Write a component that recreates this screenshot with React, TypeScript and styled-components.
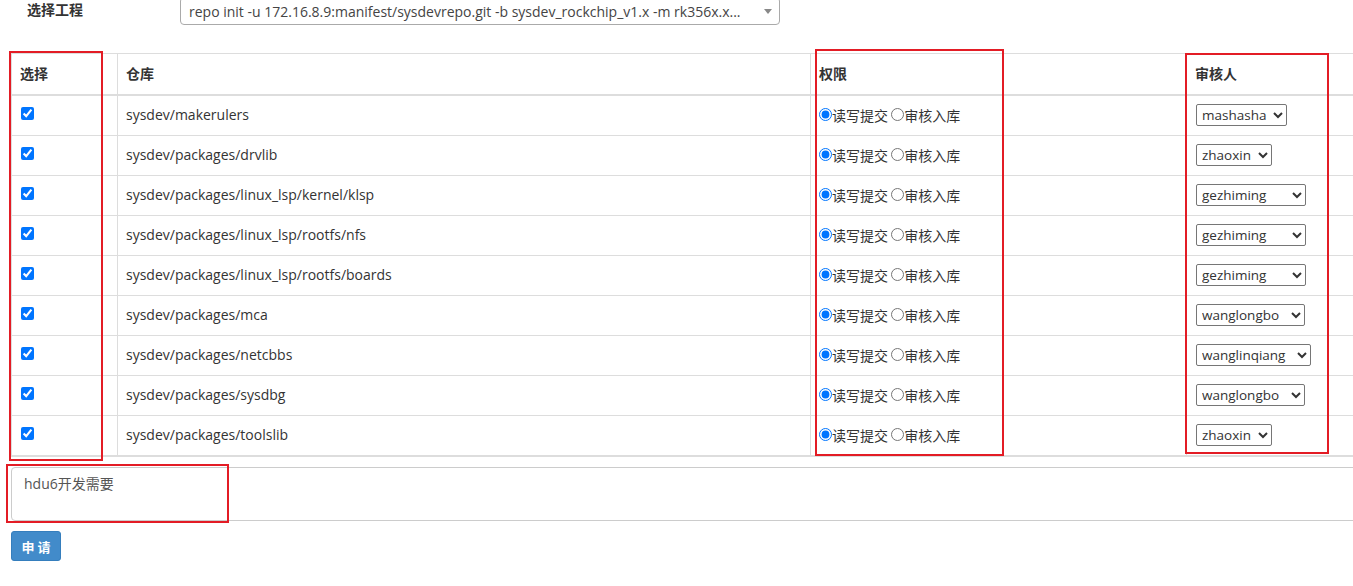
import React from "react";
import styled, { createGlobalStyle } from "styled-components";

const GlobalStyle = createGlobalStyle`
  html, body {
    margin: 0;
    padding: 0;
    overflow: hidden;
    background: #fff;
  }
  * { box-sizing: border-box; }
  body {
    font-family: "Open Sans", "Noto Sans CJK SC", sans-serif;
    font-size: 14px;
    color: #333;
  }
`;

const Page = styled.div`
  position: relative;
  display: flow-root;
  width: 1440px;
  height: 586px;
`;

const TopBar = styled.div`
  display: flex;
  align-items: flex-start;
  margin-top: -3px;
  padding-left: 27px;
`;

const Label = styled.div`
  width: 153px;
  padding-top: 3px;
  line-height: 18px;
  font-weight: bold;
  font-family: "Noto Sans CJK SC", sans-serif;
  font-size: 14px;
  color: #333;
`;

const Select2Box = styled.div`
  position: relative;
  width: 600px;
  height: 28px;
  border: 1px solid #aaa;
  border-radius: 4px;
  background: #fff;
  padding-left: 8px;
  line-height: 27px;
  color: #444;
  font-size: 14px;
  white-space: nowrap;
  overflow: hidden;
`;

const Select2Arrow = styled.span`
  position: absolute;
  right: 7px;
  top: 11px;
  width: 0;
  height: 0;
  border-style: solid;
  border-width: 5px 4px 0 4px;
  border-color: #888 transparent transparent transparent;
`;

const Table = styled.table`
  margin: 28px 0 0 11px;
  border-collapse: separate;
  border-spacing: 0;
  table-layout: fixed;
  width: 1420px;
  border-bottom: 1px solid #ddd;
`;

const HeadCell = styled.th`
  height: 43px;
  padding: 0 8px 2px;
  text-align: left;
  font-weight: bold;
  font-family: "Noto Sans CJK SC", sans-serif;
  font-size: 14px;
  color: #333;
  border-top: 1px solid #ddd;
  border-bottom: 2px solid #ddd;
  border-left: 1px solid #ddd;
  vertical-align: middle;
`;

const Cell = styled.td`
  height: 40px;
  padding: 0 8px 2px;
  border-bottom: 1px solid #ddd;
  border-left: 1px solid #ddd;
  vertical-align: middle;
  color: #333;
  font-size: 14px;
  white-space: nowrap;
`;

const Check = styled.input.attrs({ type: "checkbox" })`
  display: block;
  width: 13px;
  height: 13px;
  margin: 0 0 3px 1px;
`;

const RadioGroup = styled.div`
  display: flex;
  align-items: center;
  font-family: "Noto Sans CJK SC", sans-serif;
  font-size: 14px;
  line-height: 20px;
  color: #333;
  white-space: pre;
`;

const Radio = styled.input.attrs({ type: "radio" })`
  width: 13px;
  height: 13px;
  margin: 0 0 1px 0;
`;

const Reviewer = styled.select<{ $w: number }>`
  width: ${(p) => p.$w}px;
  height: 22px;
  margin: 0 0 0 1px;
  font-family: "Open Sans", sans-serif;
  font-size: 13.5px;
  color: #333;
  border: 1px solid #767676;
  border-radius: 2px;
  background: #fff;
  padding: 0 1px;
`;

const Note = styled.textarea`
  display: block;
  margin: 10px 0 0 11px;
  width: 1420px;
  height: 54px;
  padding: 6px 12px;
  border: 1px solid #ccc;
  border-radius: 4px;
  font-family: "Open Sans", "Noto Sans CJK SC", sans-serif;
  font-size: 14px;
  line-height: 20px;
  color: #555;
  resize: none;
  outline: none;
`;

const SubmitButton = styled.button`
  display: block;
  margin: 10px 0 0 11px;
  width: 50px;
  height: 30px;
  border: 1px solid #357ebd;
  border-radius: 3px;
  background: #428bca;
  color: #fff;
  font-family: "Noto Sans CJK SC", sans-serif;
  font-weight: bold;
  font-size: 13px;
  padding: 0;
  white-space: pre;
`;

const Mark = styled.div<{ $x: number; $y: number; $w: number; $h: number }>`
  position: absolute;
  left: ${(p) => p.$x}px;
  top: ${(p) => p.$y}px;
  width: ${(p) => p.$w}px;
  height: ${(p) => p.$h}px;
  border: 2px solid #e31c25;
  pointer-events: none;
`;

const rows: { repo: string; reviewer: string; w: number }[] = [
  { repo: "sysdev/makerulers", reviewer: "mashasha", w: 91 },
  { repo: "sysdev/packages/drvlib", reviewer: "zhaoxin", w: 76 },
  { repo: "sysdev/packages/linux_lsp/kernel/klsp", reviewer: "gezhiming", w: 110 },
  { repo: "sysdev/packages/linux_lsp/rootfs/nfs", reviewer: "gezhiming", w: 110 },
  { repo: "sysdev/packages/linux_lsp/rootfs/boards", reviewer: "gezhiming", w: 110 },
  { repo: "sysdev/packages/mca", reviewer: "wanglongbo", w: 109 },
  { repo: "sysdev/packages/netcbbs", reviewer: "wanglinqiang", w: 115 },
  { repo: "sysdev/packages/sysdbg", reviewer: "wanglongbo", w: 109 },
  { repo: "sysdev/packages/toolslib", reviewer: "zhaoxin", w: 76 },
];

export default function App() {
  return (
    <>
      <GlobalStyle />
      <Page>
        <TopBar>
          <Label>选择工程</Label>
          <Select2Box>
            repo init -u 172.16.8.9:manifest/sysdevrepo.git -b sysdev_rockchip_v1.x -m rk356x.x...
            <Select2Arrow />
          </Select2Box>
        </TopBar>

        <Table>
          <colgroup>
            <col style={{ width: 106 }} />
            <col style={{ width: 693 }} />
            <col style={{ width: 376 }} />
            <col style={{ width: 245 }} />
          </colgroup>
          <thead>
            <tr>
              <HeadCell>选择</HeadCell>
              <HeadCell>仓库</HeadCell>
              <HeadCell>权限</HeadCell>
              <HeadCell>审核人</HeadCell>
            </tr>
          </thead>
          <tbody>
            {rows.map((r, i) => (
              <tr key={i}>
                <Cell>
                  <Check defaultChecked />
                </Cell>
                <Cell>{r.repo}</Cell>
                <Cell>
                  <RadioGroup>
                    <Radio name={`perm${i}`} defaultChecked />
                    {"读写提交 "}
                    <Radio name={`perm${i}`} />
                    审核入库
                  </RadioGroup>
                </Cell>
                <Cell>
                  <Reviewer $w={r.w} defaultValue={r.reviewer}>
                    <option value={r.reviewer}>{r.reviewer}</option>
                  </Reviewer>
                </Cell>
              </tr>
            ))}
          </tbody>
        </Table>

        <Note defaultValue="hdu6开发需要" />
        <SubmitButton>{"申 请"}</SubmitButton>

        <Mark $x={9} $y={51} $w={94} $h={410} />
        <Mark $x={815} $y={49} $w={189} $h={407} />
        <Mark $x={1185} $y={53} $w={144} $h={401} />
        <Mark $x={6} $y={464} $w={223} $h={59} />
      </Page>
    </>
  );
}
